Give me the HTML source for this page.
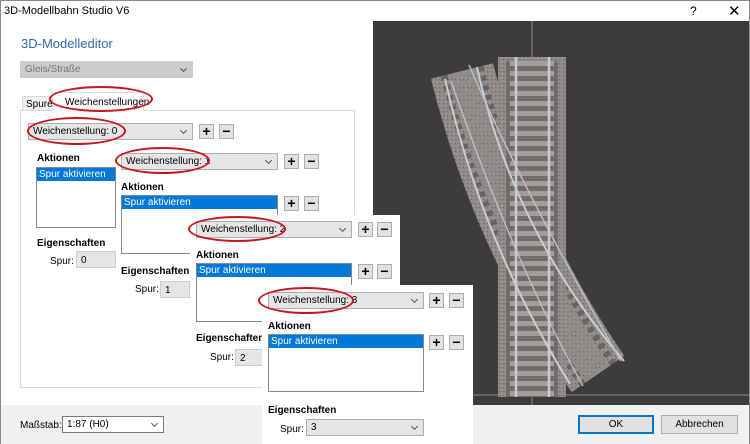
<!DOCTYPE html>
<html><head><meta charset="utf-8"><style>
*{margin:0;padding:0;box-sizing:border-box}
body{width:750px;height:444px;overflow:hidden;background:#fff;font-family:"Liberation Sans",sans-serif;font-size:10px;color:#000;position:relative}
.a{position:absolute}
.cb{position:absolute;background:#e5e5e5;border:1px solid #adadad;height:17px;padding:2px 4px;font-size:10px}
.cb:after{content:"";position:absolute;right:6px;top:4px;width:4px;height:4px;border-right:1px solid #555;border-bottom:1px solid #555;transform:rotate(45deg)}
.btn{position:absolute;width:15px;height:15px;background:#e1e1e1;border:1px solid #adadad;font-weight:bold;font-size:14px;line-height:12px;text-align:center}
.lb{position:absolute;background:#fff;border:1px solid #828790}
.lb div{background:#0078d7;color:#fff;padding:0 2px;height:13px;line-height:13px}
.b{font-weight:bold;font-size:10px}
.fld{position:absolute;background:#e5e5e5;border:1px solid #ccc;height:17px;padding:3px 4px}
.ell{position:absolute;border:2px solid #c4161c;border-radius:50%}
.pan{position:absolute;background:#fff}
</style></head><body>
<div class="a" style="left:0;top:0;width:750px;height:22px;background:#fff;border:1px solid #888;border-bottom:none"></div>
<div class="a" style="left:4px;top:5px;font-size:11px">3D-Modellbahn Studio V6</div>
<div class="a" style="left:690px;top:4px;font-size:12px">?</div>
<div class="a" style="left:728px;top:2px;font-size:15px">✕</div>
<div class="a" style="left:0;top:22px;width:1px;height:422px;background:#888"></div>
<div class="a" style="left:749px;top:22px;width:1px;height:422px;background:#888"></div>
<div class="a" style="left:21px;top:36px;font-size:13px;color:#2d6aa3">3D-Modelleditor</div>
<div class="cb" style="left:20px;top:61px;width:173px;background:#ccc;border-color:#ccc;color:#777">Gleis/Straße</div>
<div class="a" style="left:20px;top:110px;width:335px;height:278px;border:1px solid #d9d9d9;background:#fff"></div>
<div class="a" style="left:22px;top:96px;width:32px;height:15px;background:#f0f0f0;border:1px solid #d9d9d9;padding:2px 3px">Spuren</div>
<div class="a" style="left:52px;top:92px;width:92px;height:19px;background:#fff;border:1px solid #d9d9d9;border-bottom:none;padding:4px 12px">Weichenstellungen</div>
<div class="ell" style="left:49px;top:86px;width:104px;height:26px"></div>
<!-- viewport -->
<svg class="a" style="left:373px;top:21px" width="376" height="384">
<rect width="376" height="384" fill="#3c3c3c"/>
<line x1="159" y1="0" x2="159" y2="384" stroke="#8a8a8a"/>
<line x1="0" y1="374" x2="376" y2="374" stroke="#8a8a8a"/>
<defs><pattern id="g" width="4" height="4" patternUnits="userSpaceOnUse"><rect width="4" height="4" fill="#8d8886"/><rect width="2" height="2" fill="#9a9693"/><rect x="2" y="2" width="1" height="1" fill="#6f6a68"/></pattern></defs>
<path d="M89 50 Q130 215 225 353" stroke="url(#g)" stroke-width="64" fill="none"/>
<path d="M89 50 Q130 215 225 353" stroke="#5e5450" stroke-width="44" stroke-dasharray="5 5" fill="none" opacity=".7"/>
<path d="M89 50 Q130 215 225 353" stroke="#a9a6a4" stroke-width="30" stroke-dasharray="5 5" fill="none" opacity=".6"/>
<rect x="125" y="36" width="68" height="340" fill="url(#g)"/>
<rect x="133" y="40" width="52" height="336" fill="#5e5450" opacity=".55"/>
<g fill="#a9a6a4" opacity=".85"><rect x="125" y="40" width="68" height="340" fill="url(#g)" opacity=".0"/></g>
<path d="M140 36V376M185 36V376" stroke="none"/>
<g stroke="#9e9a97" stroke-width="5"><line x1="130" y1="36" x2="190" y2="36" stroke="none"/></g>
<rect x="125" y="36" width="68" height="340" fill="none"/>
<g stroke="#a29e9b" stroke-width="6" stroke-dasharray="5 5"><line x1="159" y1="40" x2="159" y2="376" stroke-width="44"/></g>
<path d="M72 58 Q108 220 197 363M104 46 Q140 210 251 340" stroke="#c9ccd3" stroke-width="2" fill="none"/>
<path d="M96 44 Q150 170 248 340M78 60 Q140 240 210 365" stroke="#b8bcc4" stroke-width="1.5" fill="none"/>
<line x1="143" y1="36" x2="143" y2="376" stroke="#c9ccd3" stroke-width="2.5"/>
<line x1="176" y1="36" x2="176" y2="376" stroke="#c9ccd3" stroke-width="2.5"/>
</svg>
<!-- bottom bar -->
<div class="a" style="left:1px;top:405px;width:748px;height:39px;background:#f0f0f0"></div>
<div class="a" style="left:20px;top:420px">Maßstab:</div>
<div class="cb" style="left:62px;top:416px;width:102px;background:#fff;border-color:#7a7a7a">1:87 (H0)</div>
<div class="a" style="left:578px;top:415px;width:76px;height:19px;background:#e1e1e1;border:2px solid #0078d7;text-align:center;line-height:15px">OK</div>
<div class="a" style="left:661px;top:415px;width:77px;height:19px;background:#e1e1e1;border:1px solid #adadad;text-align:center;line-height:17px">Abbrechen</div>
<!-- panel 0 -->
<div class="cb" style="left:28px;top:123px;width:165px">Weichenstellung: 0</div>
<div class="btn" style="left:199px;top:124px">+</div><div class="btn" style="left:219px;top:124px">−</div>
<div class="ell" style="left:27px;top:117px;width:99px;height:28px"></div>
<div class="a b" style="left:37px;top:153px">Aktionen</div>
<div class="lb" style="left:36px;top:167px;width:80px;height:61px"><div>Spur aktivieren</div></div>
<div class="a b" style="left:37px;top:238px">Eigenschaften</div>
<div class="a" style="left:50px;top:256px">Spur:</div>
<div class="fld" style="left:76px;top:251px;width:40px">0</div>
<!-- panel 1 -->
<div class="pan" style="left:116px;top:148px;width:234px;height:160px"></div>
<div class="cb" style="left:121px;top:153px;width:157px">Weichenstellung: 1</div>
<div class="btn" style="left:284px;top:154px">+</div><div class="btn" style="left:304px;top:154px">−</div>
<div class="ell" style="left:115px;top:147px;width:95px;height:27px"></div>
<div class="a b" style="left:121px;top:182px">Aktionen</div>
<div class="lb" style="left:121px;top:195px;width:157px;height:59px"><div>Spur aktivieren</div></div>
<div class="btn" style="left:284px;top:196px">+</div><div class="btn" style="left:304px;top:196px">−</div>
<div class="a b" style="left:121px;top:266px">Eigenschaften</div>
<div class="a" style="left:135px;top:284px">Spur:</div>
<div class="fld" style="left:160px;top:281px;width:30px">1</div>
<!-- panel 2 -->
<div class="pan" style="left:190px;top:215px;width:210px;height:160px"></div>
<div class="cb" style="left:196px;top:221px;width:156px">Weichenstellung: 2</div>
<div class="btn" style="left:358px;top:222px">+</div><div class="btn" style="left:377px;top:222px">−</div>
<div class="ell" style="left:188px;top:216px;width:98px;height:26px"></div>
<div class="a b" style="left:196px;top:250px">Aktionen</div>
<div class="lb" style="left:196px;top:263px;width:156px;height:59px"><div>Spur aktivieren</div></div>
<div class="btn" style="left:358px;top:264px">+</div><div class="btn" style="left:377px;top:264px">−</div>
<div class="a b" style="left:196px;top:333px">Eigenschaften</div>
<div class="a" style="left:210px;top:352px">Spur:</div>
<div class="fld" style="left:235px;top:349px;width:30px">2</div>
<!-- panel 3 -->
<div class="pan" style="left:262px;top:285px;width:211px;height:159px"></div>
<div class="cb" style="left:268px;top:292px;width:156px">Weichenstellung: 3</div>
<div class="btn" style="left:429px;top:293px">+</div><div class="btn" style="left:449px;top:293px">−</div>
<div class="ell" style="left:258px;top:287px;width:96px;height:27px"></div>
<div class="a b" style="left:268px;top:321px">Aktionen</div>
<div class="lb" style="left:268px;top:334px;width:156px;height:58px"><div>Spur aktivieren</div></div>
<div class="btn" style="left:429px;top:335px">+</div><div class="btn" style="left:449px;top:335px">−</div>
<div class="a b" style="left:268px;top:405px">Eigenschaften</div>
<div class="a" style="left:280px;top:424px">Spur:</div>
<div class="cb" style="left:306px;top:419px;width:118px">3</div>
</body></html>
